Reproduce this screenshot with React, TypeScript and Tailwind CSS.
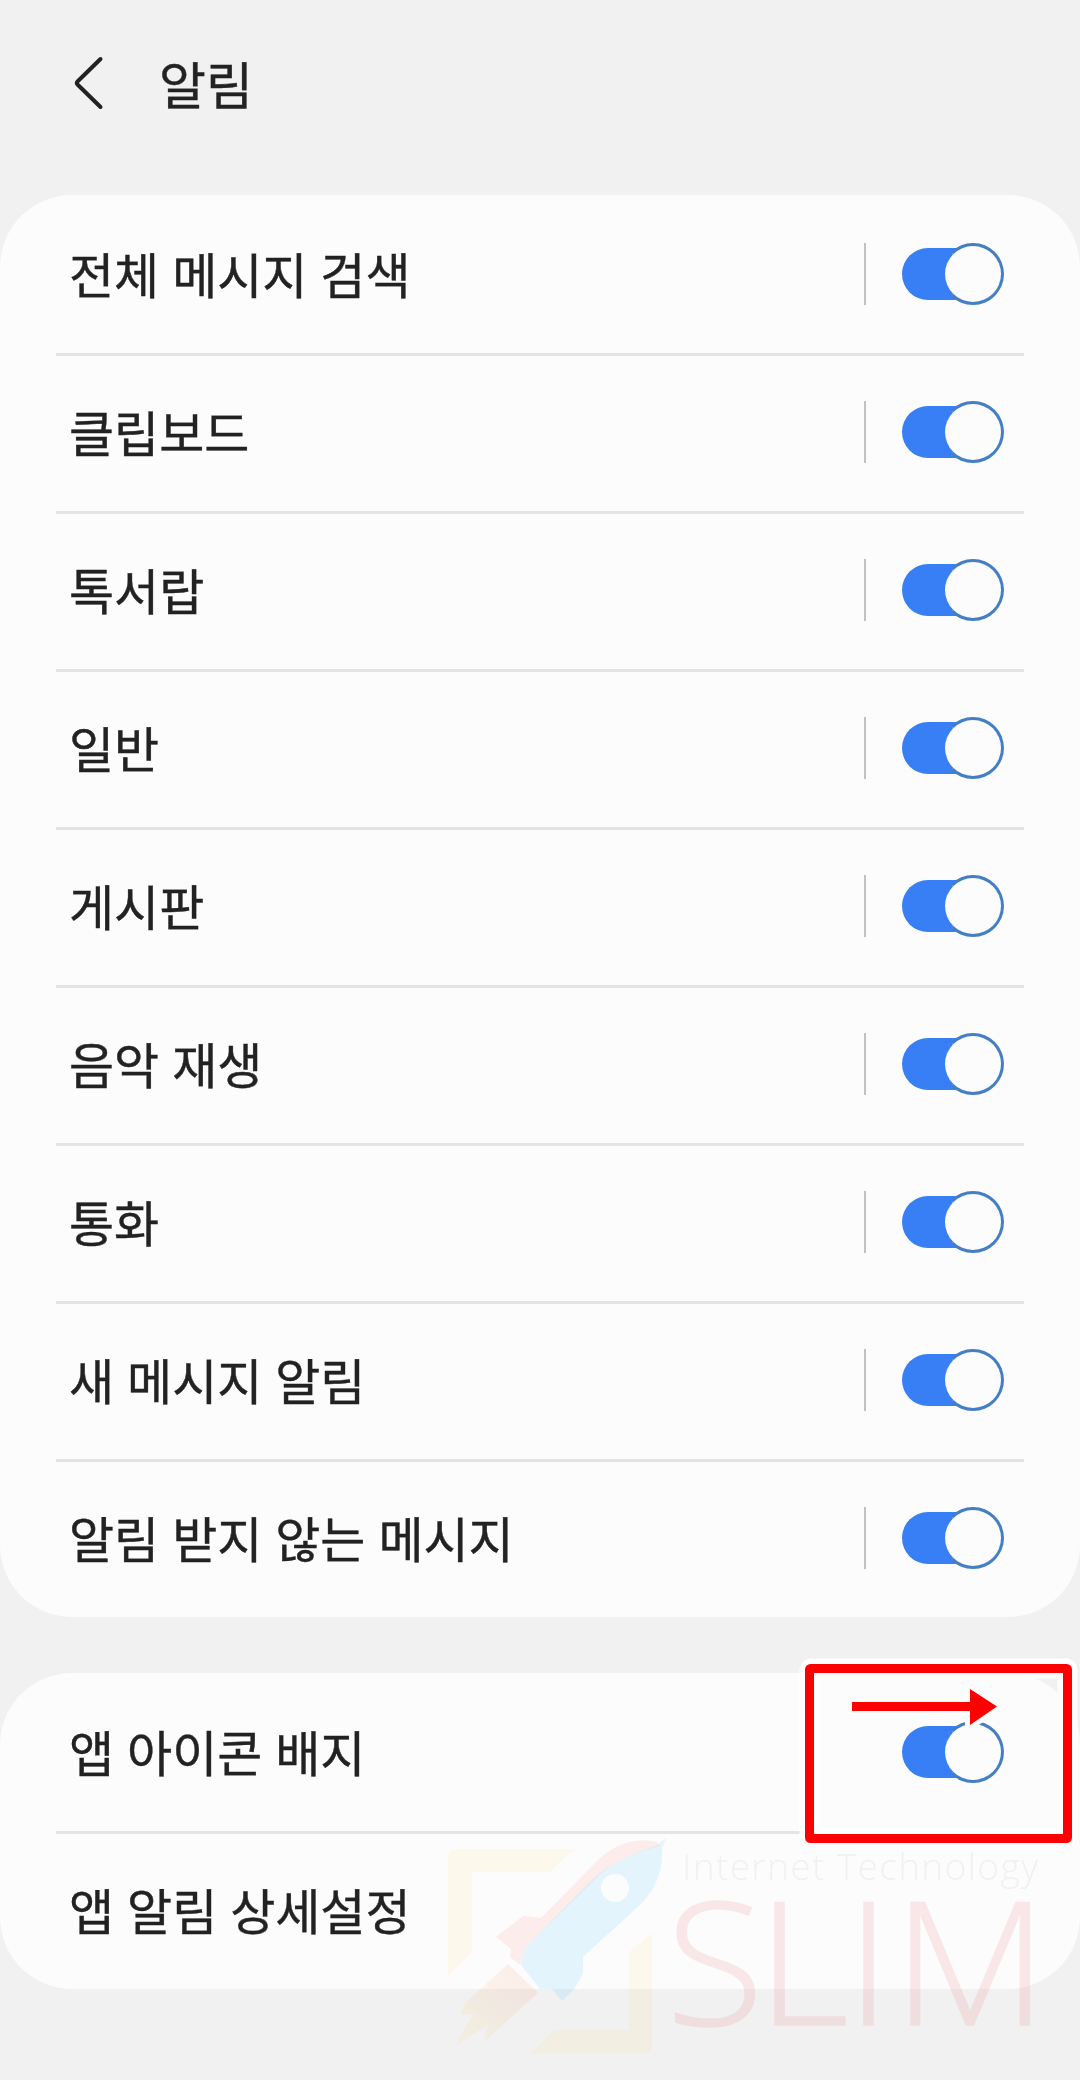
import React, { useState } from 'react';
import clsx from 'clsx';

const alertItems = [
  '전체 메시지 검색',
  '클립보드',
  '톡서랍',
  '일반',
  '게시판',
  '음악 재생',
  '통화',
  '새 메시지 알림',
  '알림 받지 않는 메시지',
];

function Toggle({ label }: { label: string }) {
  const [on, setOn] = useState(true);

  return (
    <button
      type="button"
      role="switch"
      aria-checked={on}
      aria-label={label}
      onClick={() => setOn(!on)}
      className={clsx('flex h-[62px] w-[102px] items-center', on ? 'justify-end' : 'justify-start')}
    >
      <span className={clsx('h-[52px] w-[82px] shrink-0 rounded-full', on ? 'bg-[#387ff5]' : 'bg-gray-300')}></span>
      <span
        className={clsx(
          'size-[62px] shrink-0 rounded-full border-[3px] bg-[#fcfcfc]',
          on ? '-ml-[42px] border-[#447ec4] border-l-[#387ff5]' : '-ml-[82px] border-gray-400'
        )}
      ></span>
    </button>
  );
}

type RowProps = {
  label: string;
  first?: boolean;
  separator?: boolean;
  toggle?: boolean;
};

function Row({ label, first = false, separator = true, toggle = true }: RowProps) {
  return (
    <li
      className={clsx(
        'mx-14 flex h-[158px] items-center justify-between pl-[13px] pr-5',
        !first && 'border-t-[3px] border-[#e4e4e4] pb-[3px]'
      )}
    >
      <span className="whitespace-nowrap pb-1 text-[49px] leading-none [word-spacing:2px] [-webkit-text-stroke:0.4px_#222222]">
        {label}
      </span>
      {toggle && (
        <div className="flex items-center gap-9">
          {separator && <span className="h-[62px] w-0.5 bg-[#c2c2c2]"></span>}
          <Toggle label={label} />
        </div>
      )}
    </li>
  );
}

// Red frame and arrow around the badge switch
function Highlight() {
  return (
    <svg className="pointer-events-none absolute left-[796px] top-[1655px]" width="284" height="196" viewBox="796 1655 284 196" fill="none">
      <rect x="809.5" y="1668.5" width="258" height="170" rx="2" stroke="#fff" strokeWidth="20" strokeLinejoin="round" />
      <rect x="809.5" y="1668.5" width="258" height="170" rx="1" stroke="#fe0000" strokeWidth="9" strokeLinejoin="round" />
      <path d="M852 1702H970V1689L997 1706.5L970 1725V1711H852Z" fill="#fdfdfd" stroke="#fdfdfd" strokeWidth="10" strokeLinejoin="round" />
      <path d="M852 1702H970V1689L997 1706.5L970 1725V1711H852Z" fill="#fe0000" />
    </svg>
  );
}

function Watermark() {
  return (
    <svg className="pointer-events-none absolute left-[440px] top-[1830px]" width="640" height="250" viewBox="440 1830 640 250">
      <defs>
        <linearGradient id="flame" x1="530" y1="1970" x2="460" y2="2040" gradientUnits="userSpaceOnUse">
          <stop offset="0" stopColor="#f03c1e" />
          <stop offset="1" stopColor="#f5d020" />
        </linearGradient>
      </defs>
      <g fill="#ffcf20" fillOpacity=".08">
        <path d="M448 1976V1858Q448 1849 457 1849H574L550 1872H472V1952Z" />
        <path d="M652 1933V2045Q652 2054 643 2054H531L554 2030H629V1952Z" />
      </g>
      <path d="M508 1964L538 1993L484 2042L488 2025L456 2045L465 2027L474 2014L460 2015L466 2002Z" fill="url(#flame)" fillOpacity=".08" />
      <path
        d="M520 1965L510 1957L511 1949L496 1937L523 1916L541 1918L596 1862Q623 1835 657 1842L660 1846Q616 1857 595 1879L530 1943Q521 1952 520 1965Z"
        fill="#ff3528"
        fillOpacity=".08"
      />
      <path
        d="M540 1989L521 1965Q520 1954 530 1943L590 1882Q610 1861 656 1846L666 1838L662 1848Q664 1881 640 1905L583 1957V1973Q576 1990 562 2001L552 1989ZM615 1874a14 14 0 1 0 0 28a14 14 0 1 0 0-28Z"
        fill="#28b9ff"
        fillOpacity=".11"
        fillRule="evenodd"
      />
      <text x="682" y="1880" textLength="356" fontSize="37" fontWeight="300" fill="#888888" fillOpacity=".11" fontFamily="'Open Sans', sans-serif">
        Internet Technology
      </text>
      <g opacity=".1">
        <text
          transform="scale(1.04 1)"
          x="640.4 727.9 813.5 858.6"
          y="2025.500"
          fontSize="172"
          fontWeight="300"
          fill="#e83c46"
          stroke="#e83c46"
          strokeWidth="1.5"
          fontFamily="'Open Sans', sans-serif"
        >
          SLIM
        </text>
      </g>
    </svg>
  );
}

export default function App() {
  return (
    <div className="relative h-[2080px] w-[1080px] overflow-hidden bg-[#f1f1f1] font-['Noto_Sans_CJK_KR',sans-serif] text-[#222222]">
      <header className="flex h-[195px] items-start gap-[55px] pl-[72px] pt-[55px]">
        <button type="button" aria-label="뒤로" className="h-14 w-8">
          <svg width="32" height="56" viewBox="0 0 32 56" fill="none">
            <path d="M28.500 4L5.500 26.500Q4 28 5.500 29.500L28.500 52" stroke="#222222" strokeWidth="4" strokeLinecap="round" />
          </svg>
        </button>
        <h1 className="pt-[3px] text-[51px] leading-none [-webkit-text-stroke:0.4px_#222222]">알림</h1>
      </header>

      <main className="flex flex-col gap-14">
        <ul className="rounded-[72px] bg-[#fcfcfc]">
          {alertItems.map((item, i) => (
            <Row key={item} label={item} first={i === 0} />
          ))}
        </ul>

        <ul className="rounded-[72px] bg-[#fcfcfc]">
          <Row label="앱 아이콘 배지" first separator={false} />
          <Row label="앱 알림 상세설정" toggle={false} />
        </ul>
      </main>

      <Watermark />
      <Highlight />
    </div>
  );
}
